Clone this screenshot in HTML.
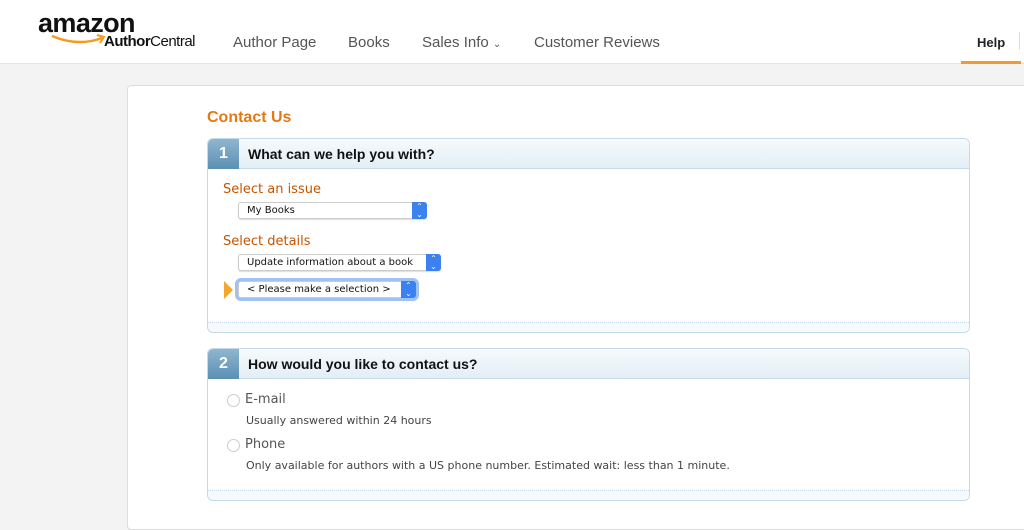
<!DOCTYPE html>
<html><head><style>
*{margin:0;padding:0;box-sizing:border-box}
body{width:1024px;height:530px;background:#f3f3f3;font-family:"Liberation Sans",Arial,sans-serif;position:relative;overflow:hidden}
.hdr{position:absolute;left:0;top:0;width:1024px;height:64px;background:#fff;border-bottom:1px solid #e4e4e4}
.nav{position:absolute;top:34px;font-size:15px;color:#555}
.card{position:absolute;left:127px;top:85px;width:920px;height:445px;background:#fff;border:1px solid #ddd;border-radius:4px}
.title{position:absolute;left:207px;top:109px;color:#e47911;font-weight:bold;font-size:16px}
.sec{position:absolute;left:207px;width:763px;border:1px solid #c5d9e6;border-radius:6px;background:#fff;overflow:hidden}
.sh{height:30px;background:linear-gradient(#f6fafc,#e2eef5);border-bottom:1px solid #c5d9e6;position:relative}
.num{position:absolute;left:0;top:0;width:31px;height:30px;background:linear-gradient(#8fb6cf,#5b8fb3);color:#fff;font-weight:bold;font-size:16px;text-align:center;line-height:30px}
.sh b{position:absolute;left:40px;top:7px;font-size:14px;color:#111}
.foot{position:absolute;left:0;bottom:0;width:100%;height:10px;border-top:1px dotted #c5d9e6;background:#f6fafc}
.v{font-family:"DejaVu Sans",Verdana,sans-serif}
.lab{position:absolute;font-size:13px;color:#c45500}
.sel{position:absolute;height:17px;border:1px solid #ccc;border-radius:3px;background:#fff;font-size:10px;color:#111;padding-left:8px;line-height:15px;box-shadow:0 1px 1px #ddd;white-space:nowrap}
.sel i{position:absolute;right:-1px;top:-1px;width:15px;height:17px;background:#3b82f0;border-radius:0 3px 3px 0;color:#fff;font-style:normal;font-size:8px;text-align:center;line-height:8px;padding-top:1px}
.rad{position:absolute;width:13px;height:13px;border:1px solid #ccc;border-radius:50%}
.t{position:absolute;font-size:13px;color:#555}
.s{position:absolute;font-size:11px;color:#444}
</style></head><body>
<div class="hdr">
 <div style="position:absolute;left:38px;top:8px;font-size:27px;font-weight:bold;color:#111;letter-spacing:-0.6px">amazon</div>
 <svg style="position:absolute;left:50px;top:33px" width="56" height="14"><path d="M2 3 Q28 14 52 5" stroke="#f39a1f" stroke-width="2.5" fill="none"/><path d="M47 2 L54 4 L50 10" stroke="#f39a1f" stroke-width="2" fill="none"/></svg>
 <div style="position:absolute;left:104px;top:33px;font-size:15px;color:#111;letter-spacing:-0.5px"><b>Author</b>Central</div>
 <div class="nav" style="left:233px">Author Page</div>
 <div class="nav" style="left:348px">Books</div>
 <div class="nav" style="left:422px">Sales Info <span style="font-size:10px">&#8964;</span></div>
 <div class="nav" style="left:534px">Customer Reviews</div>
 <div style="position:absolute;left:977px;top:35px;font-size:13px;font-weight:bold;color:#222">Help</div>
 <div style="position:absolute;left:961px;top:61px;width:60px;height:3px;background:#f39a2f"></div>
 <div style="position:absolute;left:1019px;top:32px;width:1px;height:18px;background:#ddd"></div>
</div>
<div class="card"></div>
<div class="title">Contact Us</div>
<div class="sec" style="top:138px;height:195px">
 <div class="sh"><div class="num">1</div><b>What can we help you with?</b></div>
 <div class="foot"></div>
</div>
<div class="lab v" style="left:223px;top:182px">Select an issue</div>
<div class="sel v" style="left:238px;top:202px;width:189px">My Books<i>&#8963;<br>&#8964;</i></div>
<div class="lab v" style="left:223px;top:234px">Select details</div>
<div class="sel v" style="left:238px;top:254px;width:203px">Update information about a book<i>&#8963;<br>&#8964;</i></div>
<svg style="position:absolute;left:224px;top:281px" width="10" height="18"><path d="M0 0 L9 9 L0 18Z" fill="#f0a830"/></svg>
<div class="sel v" style="left:238px;top:281px;width:178px;box-shadow:0 0 0 3px #9fc1f5">&lt; Please make a selection &gt;<i>&#8963;<br>&#8964;</i></div>
<div class="sec" style="top:348px;height:153px">
 <div class="sh"><div class="num">2</div><b>How would you like to contact us?</b></div>
 <div class="foot"></div>
</div>
<div class="rad" style="left:227px;top:394px"></div>
<div class="t v" style="left:245px;top:392px">E-mail</div>
<div class="s v" style="left:246px;top:414px">Usually answered within 24 hours</div>
<div class="rad" style="left:227px;top:439px"></div>
<div class="t v" style="left:245px;top:437px">Phone</div>
<div class="s v" style="left:246px;top:459px">Only available for authors with a US phone number. Estimated wait: less than 1 minute.</div>
</body></html>
